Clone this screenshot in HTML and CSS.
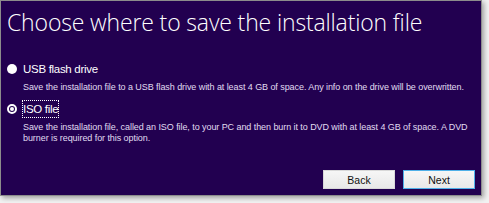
FILE: index.html
```html
<!DOCTYPE html>
<html>
<head>
<meta charset="utf-8">
<link rel="stylesheet" href="styles.css">
</head>
<body>
<div class="panel">
  <h1 class="title">Choose where to save the installation file</h1>
  <div class="options">
    <div class="option">
      <div class="opt-head">
        <span class="radio"></span>
        <span class="label">USB flash drive</span>
      </div>
      <p class="desc">Save the installation file to a USB flash drive with at least 4 GB of space. Any info on the drive will be overwritten.</p>
    </div>
    <div class="option">
      <div class="opt-head">
        <span class="radio checked"></span>
        <span class="label focused">ISO file</span>
      </div>
      <p class="desc">Save the installation file, called an ISO file, to your PC and then burn it to DVD with at least 4 GB of space. A DVD burner is required for this option.</p>
    </div>
  </div>
  <div class="buttons">
    <button class="btn">Back</button>
    <button class="btn primary">Next</button>
  </div>
</div>
</body>
</html>
```
FILE: styles.css
```css
html, body {
  margin: 0;
  padding: 0;
}
body {
  width: 489px;
  height: 203px;
  background: #f2f2f2;
  overflow: hidden;
  font-family: "Liberation Sans", Arial, sans-serif;
}
.panel {
  box-sizing: border-box;
  width: 482px;
  height: 196px;
  background: #220050;
  border: 1px solid #8c8c8c;
  box-shadow: 2px 2px 5px rgba(0,0,0,0.35);
  display: flex;
  flex-direction: column;
  padding: 0 0 0 6px;
}
.title {
  margin: 6px 0 0 0;
  font-family: "Open Sans", sans-serif;
  font-weight: 300;
  font-size: 23px;
  line-height: 30px;
  color: #ffffff;
  letter-spacing: -0.15px;
}
.options {
  margin-top: 25px;
  display: flex;
  flex-direction: column;
  gap: 9px;
}
.opt-head {
  display: flex;
  align-items: center;
  gap: 6px;
  height: 14px;
}
.radio {
  box-sizing: border-box;
  width: 10px;
  height: 10px;
  border-radius: 50%;
  background: #ffffff;
}
.radio.checked {
  border: 2px solid #ffffff;
  background: #220050;
  position: relative;
}
.radio.checked::after {
  content: "";
  position: absolute;
  left: 1px;
  top: 1px;
  width: 4px;
  height: 4px;
  border-radius: 50%;
  background: #ffffff;
}
.label {
  color: #ffffff;
  font-size: 11.5px;
  line-height: 14px;
  letter-spacing: -0.3px;
}
.label.focused {
  padding: 1px 0;
  outline: 1px dotted #ffffff;
  outline-offset: 0;
}
.desc {
  margin: 6px 0 0 16px;
  color: #e0dcf0;
  font-size: 9px;
  line-height: 11px;
  letter-spacing: -0.07px;
  max-width: 450px;
}
.buttons {
  margin-top: auto;
  margin-bottom: 6px;
  display: flex;
  justify-content: flex-end;
  gap: 8px;
  padding-right: 6px;
}
.btn {
  box-sizing: border-box;
  width: 72px;
  height: 19px;
  border: 1px solid #d8d8d8;
  background: linear-gradient(#f6f6f6, #e8e8e8);
  font-family: "Liberation Sans", Arial, sans-serif;
  font-size: 10.5px;
  color: #111111;
  padding: 0;
}
.btn.primary {
  border: 1px solid #4fb0e8;
}
```
